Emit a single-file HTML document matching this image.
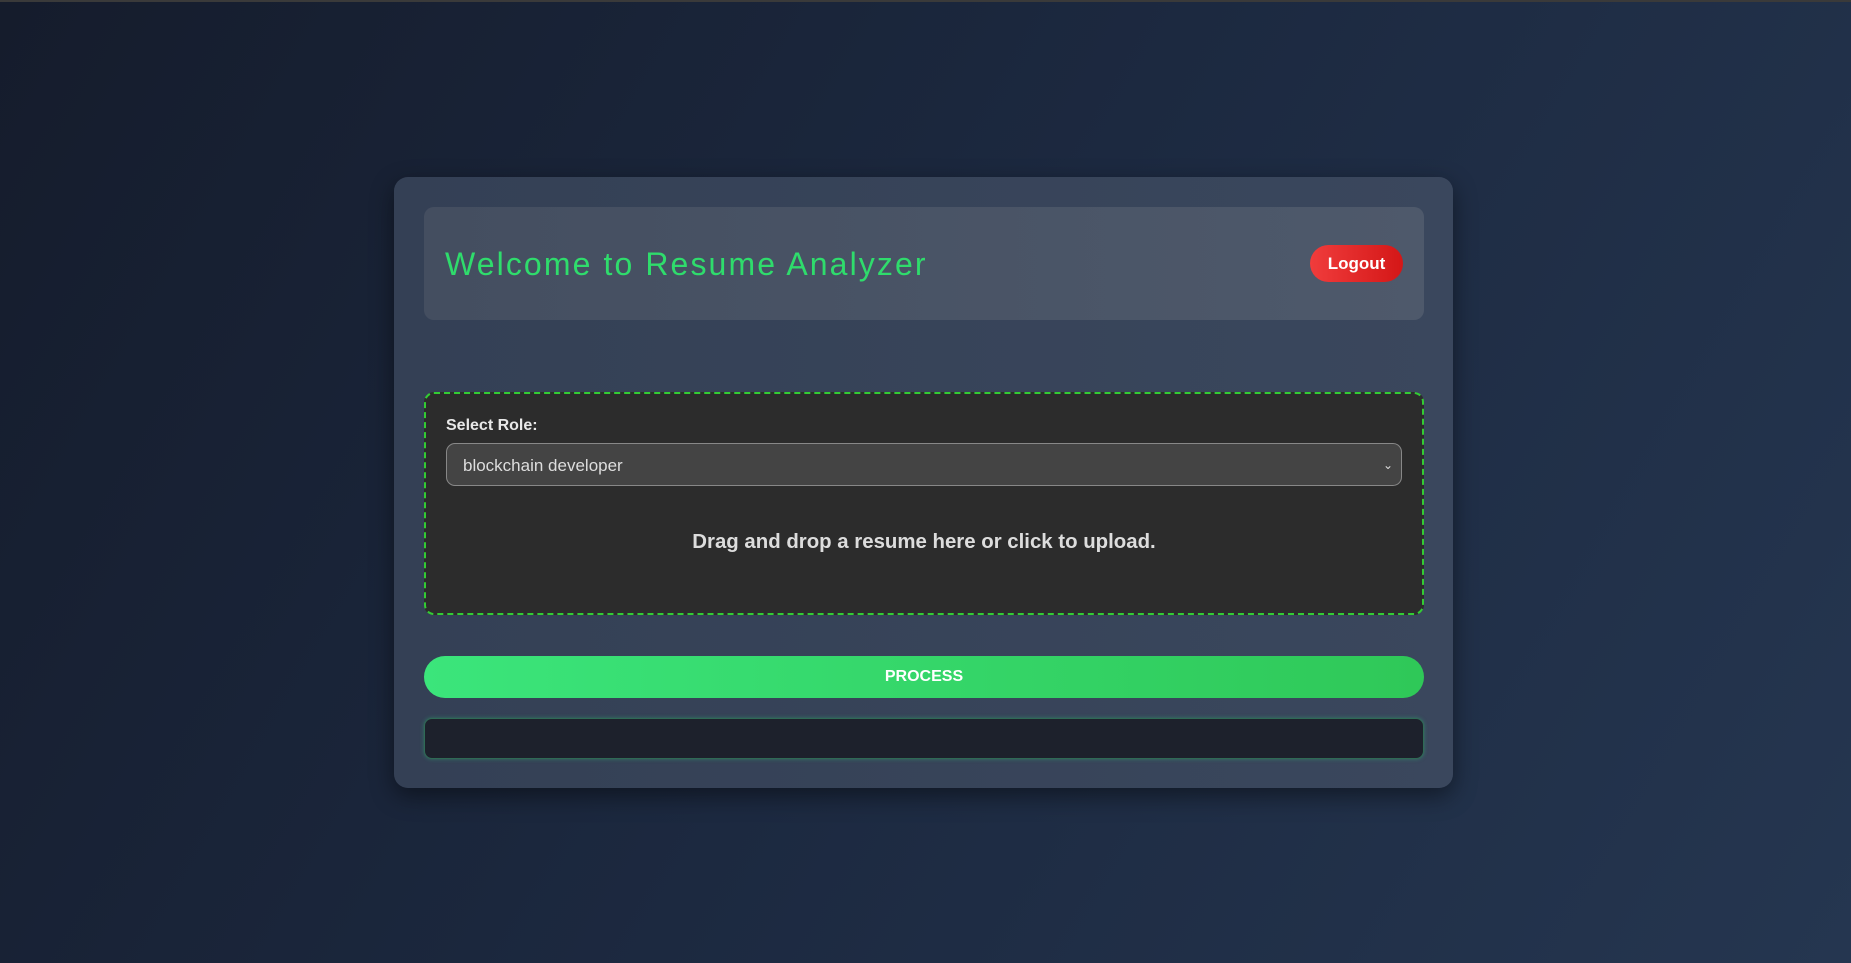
<!DOCTYPE html>
<html><head><style>
html,body{margin:0;padding:0;width:1851px;height:963px;overflow:hidden}
body{background:linear-gradient(120deg,#151c2c 0%,#1c2940 50%,#253650 100%);font-family:"Liberation Sans",sans-serif;position:relative;border-top:2px solid #3a3a3a;box-sizing:border-box}
.card{position:absolute;left:394px;top:175px;width:1059px;height:611px;background:linear-gradient(90deg,#344055,#3a475d);border-radius:14px;box-shadow:0 8px 24px rgba(0,0,0,.45)}
.hdr{position:absolute;left:30px;top:30px;width:1000px;height:113px;background:linear-gradient(90deg,#444e60,#4e596b);border-radius:10px}
.title{position:absolute;left:21px;top:39px;font-size:32px;color:#2fdc6c;letter-spacing:2.1px;font-weight:normal}
.logout{position:absolute;left:886px;top:38px;width:93px;height:37px;border-radius:19px;background:linear-gradient(90deg,#f03c3c,#d41717);color:#fff;font-weight:bold;font-size:17px;text-align:center;line-height:37px}
.drop{position:absolute;left:30px;top:215px;width:996px;height:219px;background:#2c2c2c;border:2px dashed #33cc33;border-radius:10px}
.lbl{position:absolute;left:20px;top:23px;color:#e8e8e8;font-weight:bold;font-size:16px}
.sel{position:absolute;left:20px;top:49px;width:956px;height:43px;background:#444;border:1px solid #888;border-radius:9px;color:#ddd;font-size:17px;line-height:43px;padding-left:16px;box-sizing:border-box}
.sel span{position:absolute;right:8px;top:0;font-size:12px}
.dtext{position:absolute;left:0;right:0;top:137px;text-align:center;color:#ddd;font-weight:bold;font-size:20.4px}
.proc{position:absolute;left:30px;top:479px;width:1000px;height:42px;border-radius:21px;background:linear-gradient(90deg,#3be57b,#2fc858);color:#fff;font-weight:bold;font-size:16px;text-align:center;line-height:42px}
.out{position:absolute;left:30px;top:541px;width:998px;height:39px;border-radius:8px;background:#1d212c;border:1px solid #2f6a55;box-shadow:0 0 4px rgba(47,200,120,.4)}
</style></head><body>
<div class="card">
<div class="hdr"><div class="title">Welcome to Resume Analyzer</div><div class="logout">Logout</div></div>
<div class="drop"><div class="lbl">Select Role:</div><div class="sel">blockchain developer<span>&#8964;</span></div>
<div class="dtext">Drag and drop a resume here or click to upload.</div></div>
<div class="proc">PROCESS</div>
<div class="out"></div>
</div>
</body></html>
